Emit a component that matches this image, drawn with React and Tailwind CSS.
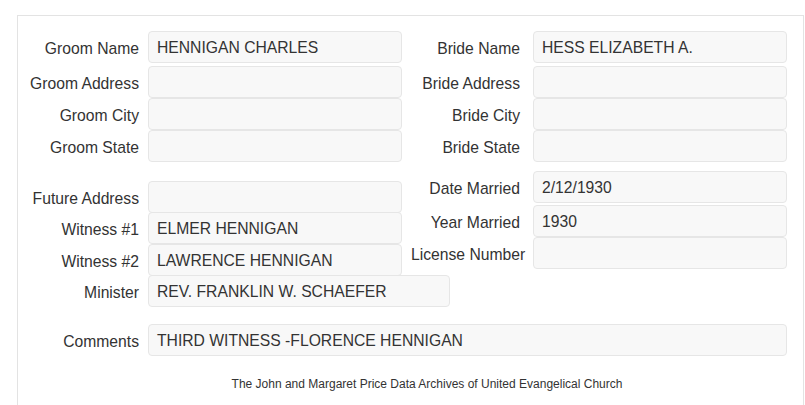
import React from "react";

const font = { fontFamily: '"Liberation Sans", Arial, sans-serif' };

function Field({ label, value, labelW, labelPl, gap, inputW, mt }) {
  return (
    <div className={`flex items-center h-8 ${mt}`}>
      <div className={`${labelW} ${labelPl} ${gap} shrink-0 text-right whitespace-nowrap pt-[3px] text-[#333]`}>
        {label}
      </div>
      <div
        className={`${inputW} h-8 shrink-0 rounded-[4px] border border-[#e6e6e6] bg-[#f8f8f8] pl-[8px] pt-[1px] flex items-center text-[#333]`}
      >
        {value}
      </div>
    </div>
  );
}

const L = { labelW: "w-[121px]", labelPl: "pl-0", gap: "mr-[9px]", inputW: "w-[254px]" };
const R = { labelW: "w-[118px]", labelPl: "pl-[9px]", gap: "mr-[13px]", inputW: "w-[254px]" };

export default function App() {
  return (
    <div className="w-[805px] h-[405px] overflow-hidden bg-white text-[15.7px] leading-[18px]" style={font}>
      <div className="ml-[17px] mt-[15px] w-[787px] h-[420px] border border-[#e3e3e3] pt-[15px]">
        <div className="flex">
          <div className="flex flex-col w-[384px]">
            <Field {...L} mt="mt-0" label="Groom Name" value="HENNIGAN CHARLES" />
            <Field {...L} mt="mt-[3px]" label="Groom Address" value="" />
            <Field {...L} mt="mt-0" label="Groom City" value="" />
            <Field {...L} mt="mt-0" label="Groom State" value="" />
          </div>
          <div className="flex flex-col">
            <Field {...R} mt="mt-0" label="Bride Name" value="HESS ELIZABETH A." />
            <Field {...R} mt="mt-[3px]" label="Bride Address" value="" />
            <Field {...R} mt="mt-0" label="Bride City" value="" />
            <Field {...R} mt="mt-0" label="Bride State" value="" />
          </div>
        </div>
        <div className="flex items-start">
          <div className="flex flex-col w-[384px] mt-[19px]">
            <Field {...L} mt="mt-0" label="Future Address" value="" />
            <Field {...L} mt="mt-[-1px]" label="Witness #1" value="ELMER HENNIGAN" />
            <Field {...L} mt="mt-0" label="Witness #2" value="LAWRENCE HENNIGAN" />
            <Field {...L} inputW="w-[302px]" mt="mt-[-1px]" label="Minister" value="REV. FRANKLIN W. SCHAEFER" />
          </div>
          <div className="flex flex-col mt-[9px]">
            <Field {...R} mt="mt-0" label="Date Married" value="2/12/1930" />
            <Field {...R} mt="mt-[2px]" label="Year Married" value="1930" />
            <Field {...R} mt="mt-0" label="License Number" value="" />
          </div>
        </div>
        <div className="mt-[17px]">
          <Field {...L} inputW="w-[639px]" mt="mt-0" label="Comments" value="THIRD WITNESS -FLORENCE HENNIGAN" />
        </div>
        <div className="mt-[21px] pl-[33px] text-center text-[12px] leading-[14px] text-[#333]">
          The John and Margaret Price Data Archives of United Evangelical Church
        </div>
      </div>
    </div>
  );
}
